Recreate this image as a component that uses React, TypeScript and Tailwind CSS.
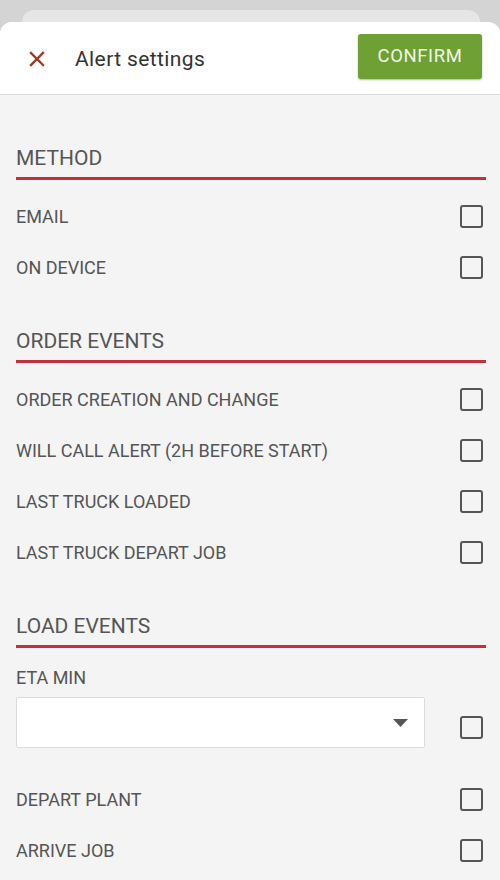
import React from "react";

const font = { fontFamily: "Roboto, 'Noto Sans', Arial, sans-serif" };

function Checkbox({ className = "" }: { className?: string }) {
  return <div className={"w-[23px] h-[23px] border-2 border-[#555] rounded-[3px] mr-[3px] shrink-0 " + className} />;
}

function Row({ label }: { label: string }) {
  return (
    <div className="h-[51px] flex items-center justify-between">
      <span className="text-[18px] text-[#555]">{label}</span>
      <Checkbox />
    </div>
  );
}

function Heading({ title, className = "" }: { title: string; className?: string }) {
  return (
    <div className={className}>
      <div className="text-[21px] leading-[24px] text-[#555]">{title}</div>
      <div className="h-[3px] bg-[#c2303e] mt-[7px] mb-[11px]" />
    </div>
  );
}

export default function App() {
  return (
    <div style={font} className="w-[500px] h-[880px] bg-[#d4d4d4] overflow-hidden flex flex-col">
      <div className="h-[10px] shrink-0" />
      <div className="h-[12px] mx-[22px] w-[458px] bg-[#e6e6e6] rounded-t-[12px] shrink-0" />
      <div className="flex-1 flex flex-col bg-[#f4f4f4] rounded-t-[12px] overflow-hidden">
        <div className="h-[73px] shrink-0 bg-white border-b border-[#dcdcdc] flex items-center pl-[29px] pr-[18px]">
          <svg width="16" height="16" viewBox="0 0 16 16" className="mt-[1px]">
            <path d="M2 2 L14 14 M14 2 L2 14" stroke="#a13a24" strokeWidth="2.4" strokeLinecap="square" />
          </svg>
          <span className="ml-[30px] mt-[4px] text-[21px] tracking-[0.4px] text-[#333] flex-1">Alert settings</span>
          <button className="w-[124px] h-[45px] bg-[#6ea034] rounded-[3px] shadow-[0_1px_2px_rgba(0,0,0,0.3)] text-[#f1f6e8] text-[18.5px] tracking-[0.6px] -mt-[3px]">
            CONFIRM
          </button>
        </div>
        <div className="pl-[16px] pr-[14px] pt-[51px] flex flex-col">
          <Heading title="METHOD" />
          <Row label="EMAIL" />
          <Row label="ON DEVICE" />
          <Heading title="ORDER EVENTS" className="mt-[36px]" />
          <Row label="ORDER CREATION AND CHANGE" />
          <Row label="WILL CALL ALERT (2H BEFORE START)" />
          <Row label="LAST TRUCK LOADED" />
          <Row label="LAST TRUCK DEPART JOB" />
          <Heading title="LOAD EVENTS" className="mt-[36px]" />
          <div className="text-[18px] leading-[20px] text-[#555] mt-[9px]">ETA MIN</div>
          <div className="flex items-center justify-between mt-[9px]">
            <div className="w-[409px] h-[51px] bg-white border border-[#dcdcdc] rounded-[2px] flex items-center justify-end pr-[16px]">
              <svg width="15" height="8" viewBox="0 0 15 8">
                <path d="M0 0 L15 0 L7.5 8 Z" fill="#555" />
              </svg>
            </div>
            <Checkbox className="mt-[10px]" />
          </div>
          <div className="h-[26px]" />
          <Row label="DEPART PLANT" />
          <Row label="ARRIVE JOB" />
        </div>
      </div>
    </div>
  );
}
